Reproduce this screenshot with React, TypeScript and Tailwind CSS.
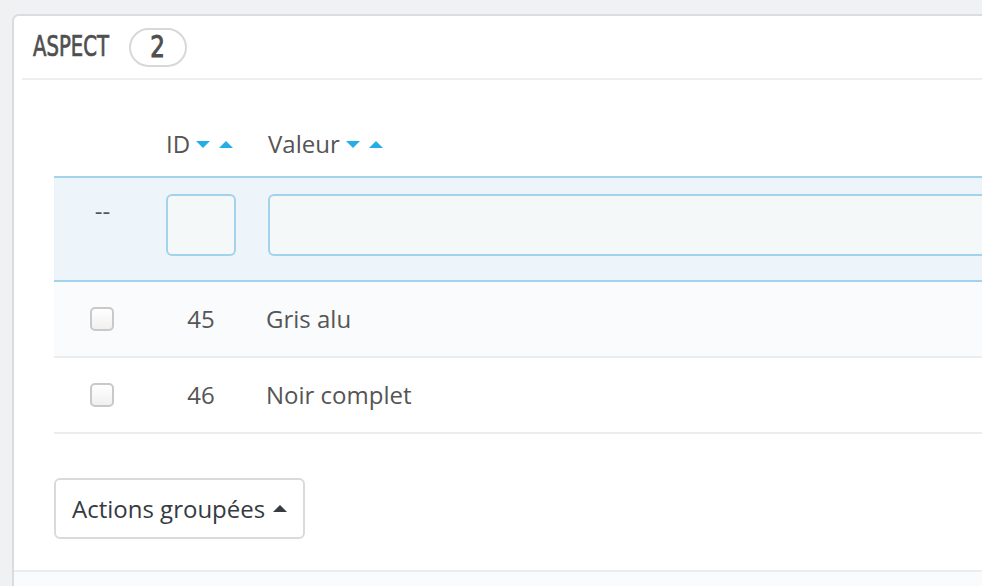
function SortArrows() {
  return (
    <span className="ml-[6px] inline-flex items-center gap-[9px]">
      <svg width="14" height="7" viewBox="0 0 14 7">
        <path d="M0 0 L14 0 L7 7 Z" fill="#25aee6" />
      </svg>
      <svg width="14" height="7" viewBox="0 0 14 7">
        <path d="M0 7 L14 7 L7 0 Z" fill="#25aee6" />
      </svg>
    </span>
  );
}

function Checkbox() {
  return (
    <span className="block h-6 w-6 rounded-[5px] border-2 border-[#c9c9c9] bg-gradient-to-b from-white to-[#f0f0f0]" />
  );
}

export default function App() {
  const rows = [
    { id: 45, value: "Gris alu", bg: "bg-[#fafbfc]" },
    { id: 46, value: "Noir complet", bg: "bg-white" },
  ];
  return (
    <div className="h-[586px] w-[982px] overflow-hidden bg-[#eff1f2] pl-3 pt-[14px] font-['Open_Sans',sans-serif] text-[24px] leading-[34px] text-[#555555]">
      <div className="h-[700px] w-[1100px] rounded-[7px] border-2 border-[#d9dddf] bg-white">
        <div className="mx-2 flex h-[64px] items-center border-b-2 border-[#eeeeee] pl-[11px]">
          <span className="block w-[76px] whitespace-nowrap">
            <span className="inline-block origin-left scale-x-[0.78] font-['Liberation_Sans_Narrow','DejaVu_Sans_Condensed',sans-serif] text-[28px] font-normal leading-none text-[#4f4f4f] [-webkit-text-stroke:0.7px_#4f4f4f]">
              ASPECT
            </span>
          </span>
          <span className="ml-5 flex h-[39px] w-[58px] items-center justify-center rounded-full border-2 border-[#d8d8d8]">
            <span className="inline-block scale-x-[0.85] font-['Liberation_Sans_Narrow','DejaVu_Sans_Condensed',sans-serif] text-[30px] font-normal leading-none text-[#4f4f4f] [-webkit-text-stroke:1px_#4f4f4f]">
              2
            </span>
          </span>
        </div>
        <div className="pl-10">
          <div className="flex h-[96px] items-end pb-[15px]">
            <div className="w-[96px]" />
            <div className="flex w-[102px] items-center px-4">
              ID
              <SortArrows />
            </div>
            <div className="flex flex-1 items-center px-4">
              Valeur
              <SortArrows />
            </div>
          </div>
          <div className="flex h-[106px] border-y-2 border-[#a3d2ec] bg-[#edf5fb] pt-4">
            <div className="w-[96px] pl-px text-center">--</div>
            <div className="w-[102px] px-4">
              <div className="h-[62px] w-full rounded-[6px] border-2 border-[#a3d2ec] bg-[#f4f8f9]" />
            </div>
            <div className="flex-1 px-4">
              <div className="h-[62px] w-full rounded-[6px] border-2 border-[#a3d2ec] bg-[#f4f8f9]" />
            </div>
          </div>
          {rows.map((r) => (
            <div
              key={r.id}
              className={`flex h-[76px] items-center border-b-2 border-[#eaedef] ${r.bg}`}
            >
              <div className="flex w-[96px] justify-center">
                <Checkbox />
              </div>
              <div className="w-[102px] text-center">{r.id}</div>
              <div className="flex-1 pl-[14px]">{r.value}</div>
            </div>
          ))}
          <button className="mt-[44px] flex h-[61px] w-[251px] items-center rounded-[6px] border-2 border-[#dadada] bg-white pl-4 text-[#363a41]">
            Actions groupées
            <svg className="ml-2" width="14" height="7" viewBox="0 0 14 7">
              <path d="M0 7 L14 7 L7 0 Z" fill="#363a41" />
            </svg>
          </button>
        </div>
        <div className="mt-[31px] h-[100px] border-t-2 border-[#eaedef] bg-[#fafbfc]" />
      </div>
    </div>
  );
}
